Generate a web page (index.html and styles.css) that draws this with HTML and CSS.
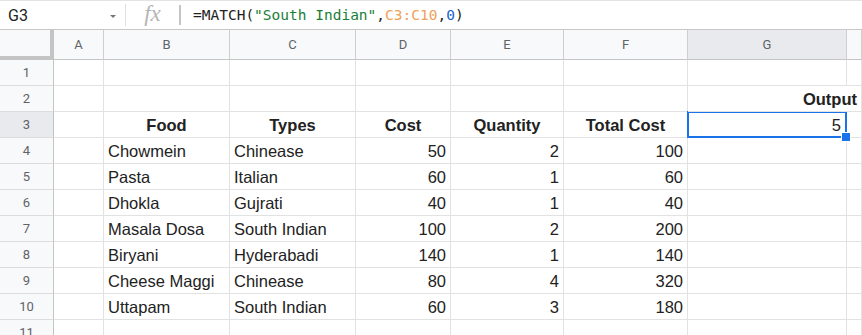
FILE: index.html
```html
<!DOCTYPE html>
<html lang="en">
<head>
  <meta charset="UTF-8">
  <title>MATCH example</title>
  <link rel="stylesheet" href="styles.css">
</head>
<body>

  <!-- Formula bar -->
  <div class="formula-bar">
    <div class="name-box">
      <span>G3</span>
      <span class="arrow"></span>
    </div>
    <div class="fx">fx</div>
    <div class="fx-sep"></div>
    <div class="formula">=MATCH(<span class="str">"South Indian"</span>,<span class="ref">C3:C10</span>,<span class="lit">0</span>)</div>
  </div>

  <!-- Sheet grid -->
  <div class="sheet">
    <div class="row head">
      <div class="corner"></div>
      <div class="ch">A</div>
      <div class="ch">B</div>
      <div class="ch">C</div>
      <div class="ch">D</div>
      <div class="ch">E</div>
      <div class="ch">F</div>
      <div class="ch sel">G</div>
      <div class="ch"></div>
    </div>

    <div class="row">
      <div class="rh">1</div>
      <div class="c"></div><div class="c"></div><div class="c"></div><div class="c"></div>
      <div class="c"></div><div class="c"></div><div class="c"></div><div class="c"></div>
    </div>

    <div class="row">
      <div class="rh">2</div>
      <div class="c"></div><div class="c"></div><div class="c"></div><div class="c"></div>
      <div class="c"></div><div class="c"></div>
      <div class="c hd right over">Output</div>
      <div class="c"></div>
    </div>

    <div class="row">
      <div class="rh sel">3</div>
      <div class="c"></div>
      <div class="c hd">Food</div>
      <div class="c hd">Types</div>
      <div class="c hd">Cost</div>
      <div class="c hd">Quantity</div>
      <div class="c hd">Total Cost</div>
      <div class="c num active">5</div>
      <div class="c"></div>
    </div>

    <div class="row">
      <div class="rh">4</div>
      <div class="c"></div>
      <div class="c">Chowmein</div>
      <div class="c">Chinease</div>
      <div class="c num">50</div>
      <div class="c num">2</div>
      <div class="c num">100</div>
      <div class="c"></div><div class="c"></div>
    </div>

    <div class="row">
      <div class="rh">5</div>
      <div class="c"></div>
      <div class="c">Pasta</div>
      <div class="c">Italian</div>
      <div class="c num">60</div>
      <div class="c num">1</div>
      <div class="c num">60</div>
      <div class="c"></div><div class="c"></div>
    </div>

    <div class="row">
      <div class="rh">6</div>
      <div class="c"></div>
      <div class="c">Dhokla</div>
      <div class="c">Gujrati</div>
      <div class="c num">40</div>
      <div class="c num">1</div>
      <div class="c num">40</div>
      <div class="c"></div><div class="c"></div>
    </div>

    <div class="row">
      <div class="rh">7</div>
      <div class="c"></div>
      <div class="c">Masala Dosa</div>
      <div class="c">South Indian</div>
      <div class="c num">100</div>
      <div class="c num">2</div>
      <div class="c num">200</div>
      <div class="c"></div><div class="c"></div>
    </div>

    <div class="row">
      <div class="rh">8</div>
      <div class="c"></div>
      <div class="c">Biryani</div>
      <div class="c">Hyderabadi</div>
      <div class="c num">140</div>
      <div class="c num">1</div>
      <div class="c num">140</div>
      <div class="c"></div><div class="c"></div>
    </div>

    <div class="row">
      <div class="rh">9</div>
      <div class="c"></div>
      <div class="c">Cheese Maggi</div>
      <div class="c">Chinease</div>
      <div class="c num">80</div>
      <div class="c num">4</div>
      <div class="c num">320</div>
      <div class="c"></div><div class="c"></div>
    </div>

    <div class="row">
      <div class="rh">10</div>
      <div class="c"></div>
      <div class="c">Uttapam</div>
      <div class="c">South Indian</div>
      <div class="c num">60</div>
      <div class="c num">3</div>
      <div class="c num">180</div>
      <div class="c"></div><div class="c"></div>
    </div>

    <div class="row">
      <div class="rh">11</div>
      <div class="c"></div><div class="c"></div><div class="c"></div><div class="c"></div>
      <div class="c"></div><div class="c"></div><div class="c"></div><div class="c"></div>
    </div>
  </div>

</body>
</html>
```
FILE: styles.css
```css
* {
  box-sizing: border-box;
  margin: 0;
  padding: 0;
}
body {
  font-family: "Liberation Sans", Arial, sans-serif;
  background-color: #fff;
  color: #222;
  width: 862px;
  overflow: hidden;
}

/* formula bar */
.formula-bar {
  display: flex;
  align-items: center;
  height: 30px;
  border-top: 1px solid #e3e3e3;
  border-bottom: 1px solid #c7c7c7;
}
.name-box {
  display: flex;
  align-items: center;
  justify-content: space-between;
  width: 126px;
  height: 22px;
  padding: 0 9px 0 8px;
  border-right: 1px solid #e0e0e0;
  font-family: Roboto, sans-serif;
  font-size: 16px;
  color: #222;
}
.arrow {
  width: 0;
  height: 0;
  border-left: 3.5px solid transparent;
  border-right: 3.5px solid transparent;
  border-top: 3.5px solid #777;
  margin-top: 2px;
}
.fx {
  width: 53px;
  text-align: center;
  font-family: "Liberation Serif", serif;
  font-style: italic;
  font-size: 23px;
  color: #b5b5b5;
  margin-top: -3px;
}
.fx-sep {
  width: 2px;
  height: 20px;
  background-color: #c4c4c4;
  margin-right: 12px;
}
.formula {
  font-family: "DejaVu Sans Mono", monospace;
  font-size: 14.5px;
  color: #222;
  white-space: nowrap;
}
.formula .str {
  color: #188038;
}
.formula .ref {
  color: #f0a05a;
}
.formula .lit {
  color: #1a5fd0;
}

/* grid */
.row {
  display: grid;
  grid-template-columns: 54px 50px 126px 126px 95px 113px 124px 159px 1fr;
  height: 26px;
}
.row.head {
  height: 30px;
}
.corner {
  background-color: #f8f9fa;
  border-right: 4px solid #c4c4c4;
  border-bottom: 4px solid #c4c4c4;
}
.ch {
  display: flex;
  align-items: center;
  justify-content: center;
  background-color: #f8f9fa;
  border-right: 1px solid #cfcfcf;
  border-bottom: 1px solid #c4c4c4;
  font-family: Roboto, sans-serif;
  font-size: 13px;
  color: #5f6368;
}
.rh {
  display: flex;
  align-items: center;
  justify-content: center;
  background-color: #f8f9fa;
  border-right: 1px solid #c4c4c4;
  border-bottom: 1px solid #dcdcdc;
  font-family: Roboto, sans-serif;
  font-size: 13px;
  color: #5f6368;
}
.ch.sel, .rh.sel {
  background-color: #e8eaed;
}
.c {
  display: flex;
  align-items: center;
  padding: 1px 4px 0;
  border-right: 1px solid #e2e2e2;
  border-bottom: 1px solid #e2e2e2;
  font-size: 16.5px;
  white-space: nowrap;
  overflow: hidden;
}
.c.num, .c.right {
  justify-content: flex-end;
}
.c.hd {
  justify-content: center;
  font-weight: bold;
}
.c.hd.right {
  justify-content: flex-end;
}
.c.over {
  overflow: visible;
  margin-right: -15px;
  position: relative;
  z-index: 1;
  background: transparent;
}

/* selected cell G3 */
.c.active {
  position: relative;
  overflow: visible;
  padding-right: 5px;
}
.c.active::after {
  content: "";
  position: absolute;
  left: -1px;
  top: -1px;
  right: -1px;
  bottom: -1px;
  border: 2px solid #1a73e8;
}
.c.active::before {
  content: "";
  position: absolute;
  right: -5px;
  bottom: -5px;
  width: 8px;
  height: 8px;
  background-color: #1a73e8;
  border: 1px solid #fff;
  z-index: 2;
}
```
